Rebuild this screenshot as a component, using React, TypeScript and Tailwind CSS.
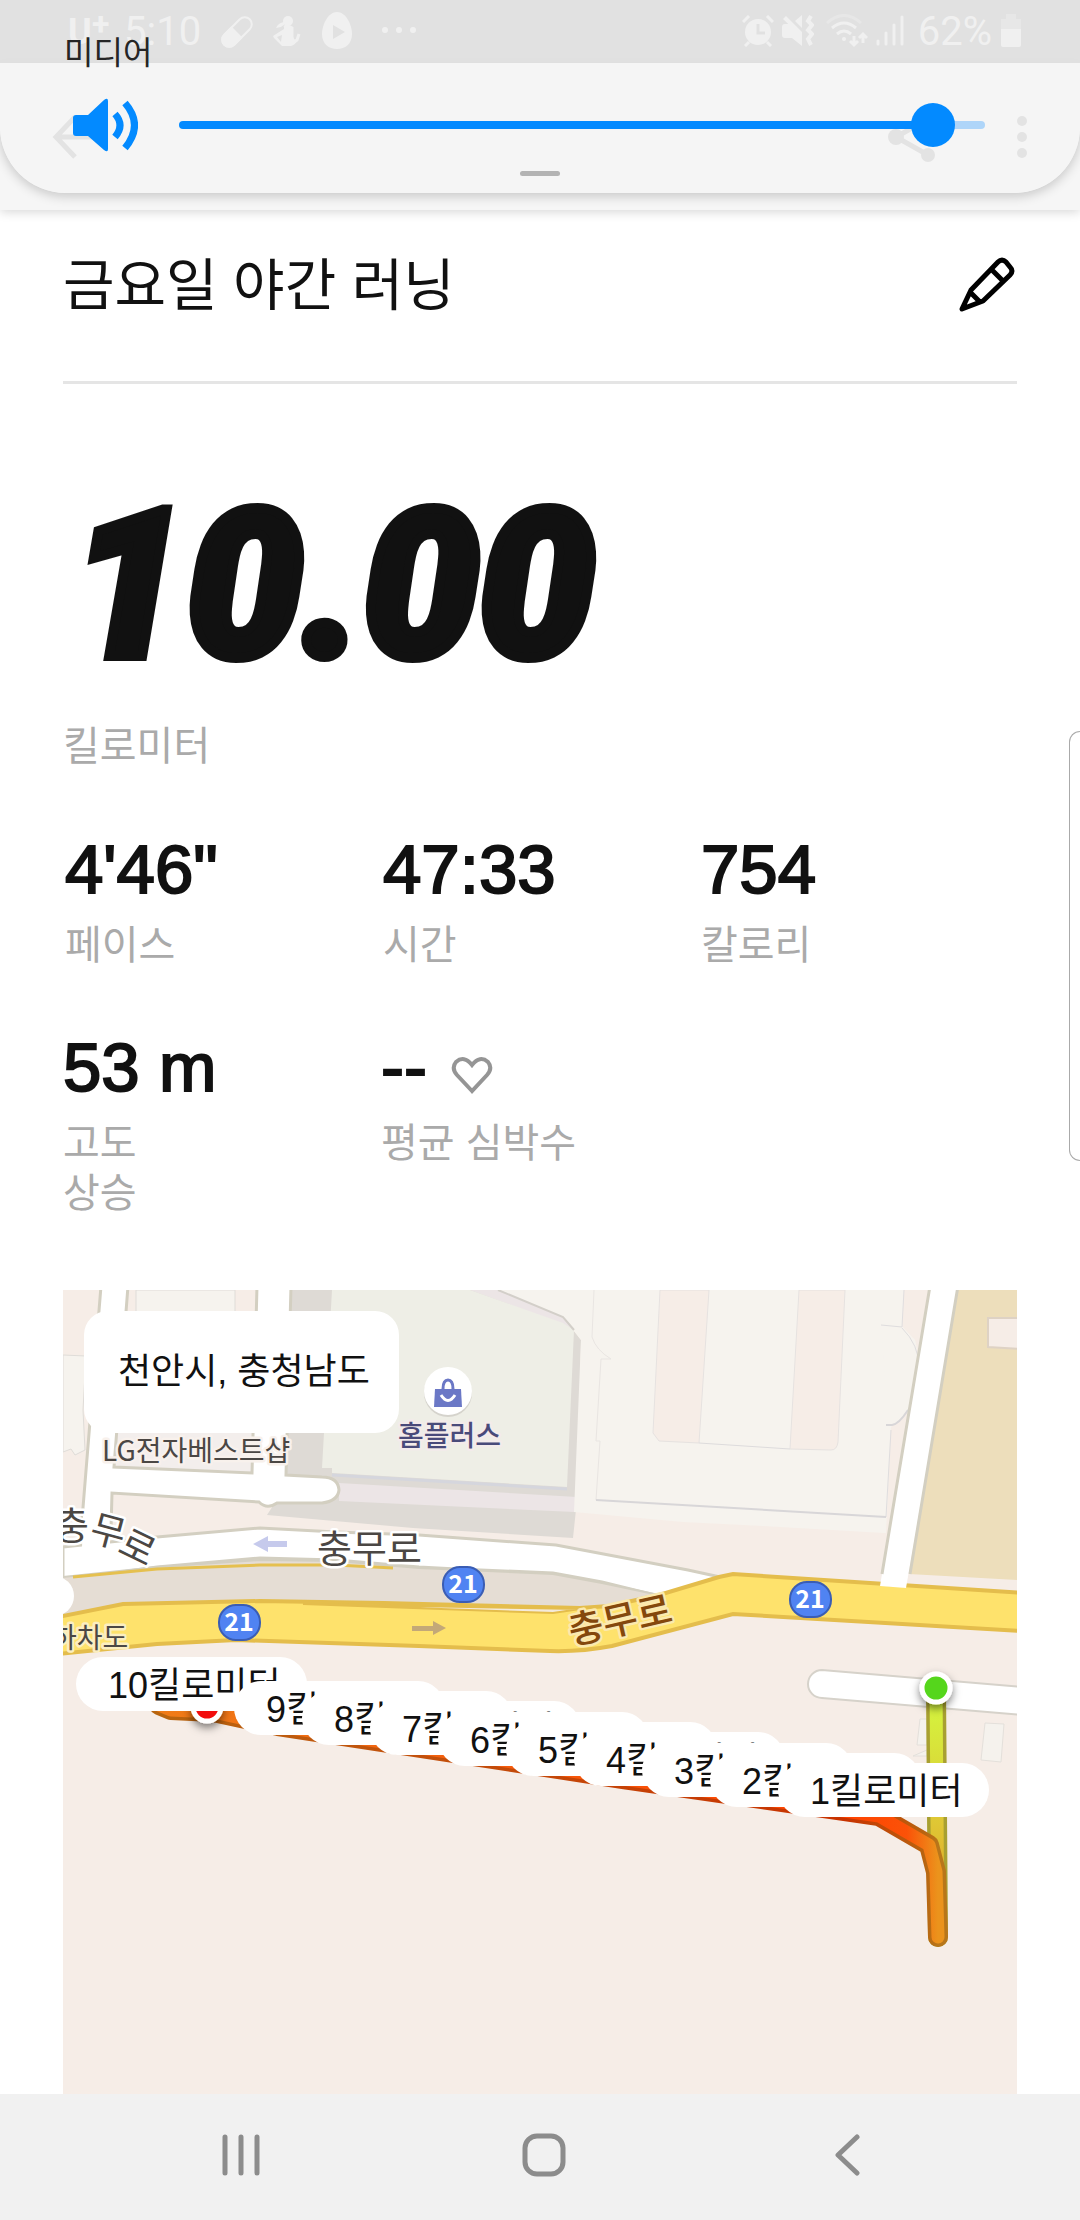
import { useState } from "react";

interface Stat {
  value: string;
  label: string;
}

const stats: Stat[] = [
  { value: "4'46\"", label: "페이스" },
  { value: "47:33", label: "시간" },
  { value: "754", label: "칼로리" },
];

// kilometre pins, drawn from the last one so that the first stays on top
const pins = [
  { km: 10, x: 13, y: 367 },
  { km: 9, x: 171, y: 391 },
  { km: 8, x: 239, y: 401 },
  { km: 7, x: 307, y: 411 },
  { km: 6, x: 375, y: 422 },
  { km: 5, x: 443, y: 432 },
  { km: 4, x: 511, y: 442 },
  { km: 3, x: 579, y: 453 },
  { km: 2, x: 647, y: 463 },
  { km: 1, x: 715, y: 473 },
];

const badges = [
  { x: 176, y: 332 },
  { x: 400, y: 294 },
  { x: 747, y: 309 },
];

function StatusBar() {
  return (
    <div className="flex h-[63px] items-start justify-between bg-[#919191] pt-2 pr-[58px] pl-[68px] font-['Roboto',sans-serif] text-[40px] leading-[48px] text-[#dcdcdc]">
      <div className="flex items-start">
        <span className="w-6 text-[36px] font-bold">U</span>
        <span className="w-8 text-[32px] leading-8 font-bold">+</span>
        <span>5:10</span>
        <svg viewBox="0 0 32 32" className="mt-2 ml-5 size-8" fill="none">
          <g transform="rotate(45 16 16)">
            <rect x="9" y="-2" width="14" height="36" rx="7" stroke="#dcdcdc" strokeWidth="2" />
            <path d="M8 16h16v11a8 8 0 0 1-16 0z" fill="#dcdcdc" />
          </g>
        </svg>
        <svg viewBox="0 0 28 32" className="mt-2 ml-5 h-8 w-7">
          <circle cx="15" cy="5" r="5" fill="#dcdcdc" />
          <path d="M11 6Q5 7 3 12L8 11 12 8z" fill="#dcdcdc" />
          <path d="M11 11Q15 9 19 12L19 21Q20 27 24 24L26 18" fill="none" stroke="#dcdcdc" strokeWidth="3" />
          <path d="M11 10Q18 9 20 13L19 21Q20 25 25 24 22 29 18 30H9L1 22 0 20 11 13zM4 21L8 26 9 19z" fill="#dcdcdc" fillRule="evenodd" />
        </svg>
        <svg viewBox="0 0 32 38" className="mt-1 ml-5 h-[38px] w-8">
          <path d="M16 0c9 0 15 13 15 22 0 10-7 15-15 15S1 32 1 22C1 13 7 0 16 0z" fill="#dcdcdc" />
          <path d="M12 13l12 7-12 7z" fill="#919191" />
        </svg>
        <svg viewBox="0 0 36 8" className="mt-[18px] ml-[28px] h-2 w-9" fill="#dcdcdc">
          <circle cx="4" cy="4" r="3" />
          <circle cx="18" cy="4" r="3" />
          <circle cx="32" cy="4" r="3" />
        </svg>
      </div>
      <div className="flex items-start">
        <svg viewBox="0 0 32 32" className="mt-[7px] size-8">
          <circle cx="16" cy="17" r="13" fill="#dcdcdc" />
          <path d="M16 9v9h7" stroke="#919191" strokeWidth="3" fill="none" />
          <path d="M1 7l6-6M31 7l-6-6M3 31l4-4M29 31l-4-4" stroke="#dcdcdc" strokeWidth="3" />
        </svg>
        <svg viewBox="0 0 32 32" className="mt-[7px] ml-2 size-8" fill="#dcdcdc">
          <path d="M0 12q0-3 3-3h4l13 12v10L10 23H3q-3 0-3-3zM13 6l7-6v13zM1 4l3-3 16 16v5z" />
          <path d="M29 1l-3 5 4 4-4 5 4 4-4 5 3 6" stroke="#dcdcdc" strokeWidth="4" fill="none" />
        </svg>
        <svg viewBox="0 0 42 34" className="mt-[6px] ml-3 h-[34px] w-[42px]" fill="none" stroke="#dcdcdc" strokeWidth="3">
          <path d="M1 9q17-15 34 0" opacity=".4" />
          <path d="M6 14q12-10 24 0M11 20q7-6 14 0" />
          <circle cx="18" cy="25" r="2" fill="#dcdcdc" stroke="none" />
          <path d="M28 22v9M24 27l4 4 4-4M37 29v-9M33 24l4-4 4 4" strokeWidth="3" />
        </svg>
        <svg viewBox="0 0 28 32" className="mt-[7px] ml-2 h-8 w-7" stroke="#dcdcdc" strokeWidth="3" strokeLinecap="round">
          <path d="M2 26v3M10 18v11M18 10v19M26 2v27" />
        </svg>
        <span className="ml-[14px]">62%</span>
        <svg viewBox="0 0 22 34" className="mt-[6px] ml-2 h-[34px] w-[22px]" fill="#dcdcdc">
          <path d="M6 0h10v5h5v10H1V5h5z" opacity=".4" />
          <path d="M1 15h20v16q0 2-2 2H3q-2 0-2-2z" />
        </svg>
      </div>
    </div>
  );
}

function AppBar() {
  return (
    <div className="relative flex h-[147px] items-center justify-between bg-[#f6f6f6] pr-[52px] pl-[50px] text-[#9b9b9b] shadow-[0_2px_10px_rgba(0,0,0,0.16)]">
      <button aria-label="뒤로" className="size-[46px]">
        <svg viewBox="0 0 46 46" fill="none" stroke="currentColor" strokeWidth="5">
          <path d="M25 3L6 23l19 20M6 23h38" />
        </svg>
      </button>
      <div className="flex items-center gap-[79px]">
        <button aria-label="공유" className="size-[50px]">
          <svg viewBox="0 0 50 50" fill="currentColor">
            <path d="M41 7L9 25l32 18" fill="none" stroke="currentColor" strokeWidth="5" />
            <circle cx="9" cy="25" r="8" />
            <circle cx="41" cy="7" r="7" />
            <circle cx="41" cy="43" r="7" />
          </svg>
        </button>
        <button aria-label="더보기" className="h-[46px] w-3">
          <svg viewBox="0 0 12 46" fill="currentColor">
            <circle cx="6" cy="7" r="5" />
            <circle cx="6" cy="23" r="5" />
            <circle cx="6" cy="39" r="5" />
          </svg>
        </button>
      </div>
    </div>
  );
}

function VolumePanel() {
  const [volume, setVolume] = useState(96);
  const filled = `calc(22px + (100% - 44px) * ${volume / 100})`;

  return (
    <div className="absolute inset-x-0 top-0 flex h-[193px] flex-col rounded-b-[66px] bg-[#f5f5f5]/80 pt-[33px] shadow-[0_3px_12px_rgba(0,0,0,0.2)]">
      <label htmlFor="volume" className="pl-16 text-[32px] leading-10 text-[#252525]">
        미디어
      </label>
      <div className="mt-[25px] flex items-center pr-[95px] pl-[72px]">
        <svg viewBox="0 0 66 54" className="h-[54px] w-[66px]" fill="#038aff">
          <path d="M1 20q0-3 3-3h12L32 2q4-3 4 1v48q0 4-4 1L16 38H4q-3 0-3-3z" />
          <path d="M43 16q10 11 0 23M53 5q19 22 0 45" fill="none" stroke="#038aff" strokeWidth="7" />
        </svg>
        <input
          id="volume"
          type="range"
          value={volume}
          onChange={(e) => setVolume(Number(e.target.value))}
          style={{ backgroundImage: `linear-gradient(to right, #038aff ${filled}, #aed5f9 ${filled})` }}
          className="ml-[41px] h-2 flex-1 appearance-none rounded-full [&::-webkit-slider-thumb]:size-11 [&::-webkit-slider-thumb]:appearance-none [&::-webkit-slider-thumb]:rounded-full [&::-webkit-slider-thumb]:bg-[#038aff]"
        />
      </div>
      <div className="mx-auto mt-[19px] h-[5px] w-10 rounded-full bg-[#b3b3b3]" />
    </div>
  );
}

function MapDrawing() {
  return (
    <svg viewBox="0 0 954 804" preserveAspectRatio="xMinYMin slice" className="absolute inset-0 size-full font-['Noto_Sans_CJK_KR',sans-serif]">
      <defs>
        <linearGradient id="out" gradientUnits="userSpaceOnUse" x1="872" y1="400" x2="875" y2="647">
          <stop offset="0" stopColor="#d3f93f" />
          <stop offset=".55" stopColor="#dfc534" />
          <stop offset="1" stopColor="#e0931f" />
        </linearGradient>
        <linearGradient id="back" gradientUnits="userSpaceOnUse" x1="96" y1="0" x2="875" y2="0">
          <stop offset="0" stopColor="#f07c18" />
          <stop offset=".3" stopColor="#f2640f" />
          <stop offset=".88" stopColor="#ff4200" />
          <stop offset=".96" stopColor="#fb5208" />
          <stop offset="1" stopColor="#eb931c" />
        </linearGradient>
        <linearGradient id="backEdge" gradientUnits="userSpaceOnUse" x1="96" y1="0" x2="875" y2="0">
          <stop offset="0" stopColor="#b8650f" />
          <stop offset=".3" stopColor="#c2520c" />
          <stop offset=".88" stopColor="#c83200" />
          <stop offset=".98" stopColor="#b8620f" />
          <stop offset="1" stopColor="#b8761a" />
        </linearGradient>
        <filter id="drop" x="-50%" y="-50%" width="200%" height="200%">
          <feDropShadow dx="0" dy="4" stdDeviation="4" floodOpacity=".5" />
        </filter>
      </defs>
      <rect width="954" height="804" fill="#f6ede7" />

      {/* blocks on the left */}
      <path d="M73 0H172V60H73zM0 65L23 66 20 120 22 160 12 165 8 159 0 162z" fill="#f6f3ee" stroke="#dfdcd8" />
      <path d="M54 140H189V183L51 177z" fill="#f3eeec" />

      {/* department store */}
      <path d="M229 0H435L500 27 518 50 514 210 510 248 350 238 204 225 215 208 223 185z" fill="#dedad5" />
      <path d="M276 193L514 207 512 222 276 211zM407 0H435L500 27 511 40 500 34z" fill="#ece5e6" />
      <path d="M269 0H407L500 33 511 40 504 197 269 183V178H259z" fill="#eeeee6" />
      <path d="M269 185L504 199" stroke="#d5d6dd" strokeWidth="3" />

      {/* apartment block */}
      <path d="M435 0H954V243H821L700 236 620 232 511 222 518 50 500 27z" fill="#f6f3ee" />
      <path d="M841 0H900L850 243H823L828 137 845 120 856 77 852 50 839 36z" fill="#f6ede7" />
      <path d="M852 50Q860 77 845 120L835 133 823 135V100L818 34 839 38z" fill="#f6f3ee" />
      <path d="M597 0L590 143 596 151 636 153 646 0zM736 0L727 159 768 160Q774 160 775 152L782 0z" fill="#f6ede7" stroke="#e6e2e0" />
      <path d="M636 153L727 159" stroke="#dddbdc" />
      <path d="M531 0L529 47Q533 60 548 69H538L533 151H537L533 210" fill="none" stroke="#e9e5e2" />
      <path d="M841 0L839 37 818 35M839 38Q856 55 856 77 854 105 845 120M828 140L823 227" fill="none" stroke="#dfddde" />
      <path d="M533 210L823 227M823 135H829Q836 134 845 120" fill="none" stroke="#d8d6d8" strokeWidth="2" />
      <path d="M435 0L500 27 511 40" fill="none" stroke="#d3cfc9" strokeWidth="2" />

      {/* school ground */}
      <path d="M895 0H954V290L846 284z" fill="#eddebb" />
      <path d="M960 28H925V57L960 59" fill="#f6ede7" stroke="#ded2c4" strokeWidth="2" />

      {/* side streets */}
      <g fill="#fff" stroke="#d3cfc1" strokeWidth="3">
        <path d="M38 -4L19 230 48 240 49 203 196 212Q204 220 214 213L259 213Q275 211 276 200 275 187 259 187L223 185 228 -4H194L189 183 51 177 65 -4z" />
        <path d="M0 257L94 247 197 238 273 242 356 245 493 255 625 280 680 292 596 306 539 292 490 283 394 279 356 277 273 270 197 268 94 277 0 290z" />
      </g>
      <path d="M20 225L47 235 47 256 19 258z" fill="#fff" />

      {/* underpass and main road */}
      <path d="M0 287L94 277 197 270 273 271 356 278 490 284 539 293 596 305 546 318 0 328z" fill="#e5ddd4" />
      <path d="M0 287L94 277 197 270 273 271 356 278 490 284 539 293 596 305" fill="none" stroke="#d3cfc1" strokeWidth="2" />
      <path d="M10 287L94 279 197 275 273 275 330 278" fill="none" stroke="#e5c04f" strokeWidth="3" />
      <path d="M-5 327L60 314 197 311 321 313 517 318 546 316 596 305 656 287 670 284 960 303V341L670 324 549 356Q517 362 487 361L356 356 173 350 94 354-5 364z" fill="#fee26c" stroke="#e4bd4c" strokeWidth="4" />
      <path d="M240 314L517 319 490 323z" fill="#f4eadb" stroke="#e4bd4c" strokeWidth="2" />
      <circle cx="-9" cy="306" r="20" fill="#fff" />
      <path d="M867 0L817 296 843 298 895 0z" fill="#fff" />
      <path d="M867 -4L819 284M895 -4L847 284" stroke="#d3cfc1" strokeWidth="3" />

      {/* lane to the start point */}
      <path d="M960 397L759 380a14 14 0 0 0 0 28L960 425" fill="#fff" stroke="#d6d2ca" strokeWidth="2" />
      <path d="M922 433L941 434 938 472 918 470zM857 429L854 455H864V429zM850 466H864V460z" fill="#f5f2ed" stroke="#e4e0db" />

      <path d="M190 254L205 246V251H224V257H205V262z" fill="#c6caec" />
      <path d="M383 338L370 331V336H349V341H370V345z" fill="#c3a878" />

      {/* labels */}
      <g fill="#4b4744" stroke="#fff" strokeWidth="5" strokeLinejoin="round" paintOrder="stroke">
        <text x="39" y="171" fontSize="28" stroke="#f8f1ec">LG전자베스트샵</text>
        <text x="335" y="156" fontSize="28" fontWeight="500" fill="#494a7a" stroke="#f3ebeb">홈플러스</text>
        <text x="254" y="272" fontSize="38">충무로</text>
        <text x="-9" y="249" fontSize="38">충</text>
        <text fontSize="38" transform="translate(25 250) rotate(15)">무</text>
        <text fontSize="38" transform="translate(53 262) rotate(26)">로</text>
        <text x="-12" y="358" fontSize="28" stroke="#fbeec0">하차도</text>
        <text fontSize="38" fontWeight="500" fill="#84480c" stroke="#fbe9ae" transform="translate(509 355) rotate(-13)">충무로</text>
      </g>

      {badges.map((b) => (
        <g key={b.x}>
          <rect x={b.x - 20} y={b.y - 17} width="41" height="35" rx="17" fill="#5083f2" stroke="#3a5db4" strokeWidth="2" />
          <text x={b.x} y={b.y + 9} textAnchor="middle" fontSize="25" fontWeight="700" fill="#fff">
            21
          </text>
        </g>
      ))}

      <circle cx="385" cy="103" r="24" fill="#d5d3cc" />
      <circle cx="385" cy="101" r="24" fill="#fff" />
      <path d="M380 99Q380 90 385 90T390 99" fill="#fff" stroke="#6b78c6" strokeWidth="3" />
      <path d="M372 99H398L399 117H371z" fill="#6b78c6" />
      <path d="M378 105Q385 116 392 105" fill="none" stroke="#fff" strokeWidth="3" />

      {/* route */}
      <g fill="none" strokeLinecap="round" strokeLinejoin="round">
        <path d="M873 398L875 647" stroke="#a8a031" strokeWidth="20" />
        <path d="M873 398L875 647" stroke="url(#out)" strokeWidth="13" />
        <path d="M96 415L108 420 150 422 215 436 560 489 816 526 866 555 873 582 875 647" stroke="url(#backEdge)" strokeWidth="20" />
        <path d="M96 415L108 420 150 422 215 436 560 489 816 526 866 555 873 582 875 647" stroke="url(#back)" strokeWidth="13" />
      </g>
      <g stroke="#fff" strokeWidth="5" filter="url(#drop)">
        <circle cx="144" cy="417" r="14" fill="#f20d0d" />
        <circle cx="873" cy="398" r="14" fill="#55d61a" />
      </g>
    </svg>
  );
}

function RouteMap() {
  return (
    <section className="relative mt-[72px] flex-1 overflow-hidden">
      <MapDrawing />
      <div className="absolute top-[21px] left-[21px] rounded-3xl bg-white py-9 pr-[29px] pl-[34px] text-[36px] leading-[50px] text-[#111]">
        천안시, 충청남도
      </div>
      {pins.map((p) => (
        <div
          key={p.km}
          style={{ left: p.x, top: p.y }}
          className="absolute rounded-full bg-white pt-1 pr-[26px] pl-8 text-[36px] leading-[50px] whitespace-nowrap text-[#111]"
        >
          {p.km}킬로미터
        </div>
      ))}
    </section>
  );
}

function NavBar() {
  return (
    <nav className="grid h-[126px] grid-cols-3 items-center justify-items-center bg-[#f1f1f1] pr-[82px] pb-1 pl-[90px] text-[#8c8c8c]">
      <button aria-label="최근 앱">
        <svg viewBox="0 0 42 42" className="size-[42px]" stroke="currentColor" strokeWidth="5" strokeLinecap="round">
          <path d="M5 3v36M21 3v36M37 3v36" />
        </svg>
      </button>
      <button aria-label="홈">
        <svg viewBox="0 0 44 44" className="size-11" fill="none" stroke="currentColor" strokeWidth="5">
          <rect x="3" y="3" width="38" height="38" rx="12" />
        </svg>
      </button>
      <button aria-label="뒤로">
        <svg viewBox="0 0 28 42" className="h-[42px] w-7" fill="none" stroke="currentColor" strokeWidth="5" strokeLinecap="round" strokeLinejoin="round">
          <path d="M24 3L5 21l19 18" />
        </svg>
      </button>
    </nav>
  );
}

export default function App() {
  return (
    <div className="relative flex min-h-screen flex-col bg-white font-['Liberation_Sans','Noto_Sans_CJK_KR',sans-serif] text-[#111]">
      <header className="relative">
        <StatusBar />
        <AppBar />
        <VolumePanel />
      </header>

      <main className="flex flex-1 flex-col px-[63px]">
        <div className="flex items-center justify-between border-b-[3px] border-[#e5e5e5] pt-9 pb-[55px]">
          <h1 className="text-[56px] leading-[80px]">금요일 야간 러닝</h1>
          <button aria-label="수정" className="size-15">
            <svg viewBox="0 0 60 60" fill="none" stroke="#000" strokeWidth="5" strokeLinejoin="round">
              <path d="M5 53L14 34 41 6q4-4 8 0l4 5q4 4 0 8L26 45zM34 13l12 12M13 36l11 11" />
            </svg>
          </button>
        </div>

        <div className="mt-[94px] pl-2 font-['Roboto',sans-serif] text-[206px] leading-[216px] font-black italic [-webkit-text-stroke:10px_#111]">
          10.00
        </div>
        <p className="mt-[27px] text-[40px] leading-[50px] text-[#aaa]">킬로미터</p>

        <div className="mt-[59px] grid grid-cols-3 gap-y-[58px]">
          {stats.map((s) => (
            <div key={s.label} className="pl-[2px]">
              <div className="text-[69px] leading-[80px] [-webkit-text-stroke:2px_#111]">{s.value}</div>
              <p className="mt-[10px] text-[40px] leading-[50px] text-[#aaa]">{s.label}</p>
            </div>
          ))}
          <div>
            <div className="text-[69px] leading-[80px] [-webkit-text-stroke:2px_#111]">53 m</div>
            <p className="mt-[10px] w-[120px] text-[40px] leading-[50px] break-keep text-[#aaa]">고도 상승</p>
          </div>
          <div>
            <div className="flex items-center text-[69px] leading-[80px] [-webkit-text-stroke:2px_#111]">
              --
              <svg viewBox="0 0 42 40" className="mt-[14px] ml-6 h-10 w-[42px]" fill="none" stroke="#959595" strokeWidth="4">
                <path d="M21 36L6 20Q0 13 5 7q8-7 16 3 8-10 16-3 5 6-1 13z" />
              </svg>
            </div>
            <p className="mt-[10px] text-[40px] leading-[50px] text-[#aaa]">평균 심박수</p>
          </div>
        </div>

        <RouteMap />
      </main>

      <NavBar />
      <div className="absolute top-[731px] right-0 h-[430px] w-[11px] rounded-l-[14px] border border-r-0 border-[#aaa] bg-white" />
    </div>
  );
}
